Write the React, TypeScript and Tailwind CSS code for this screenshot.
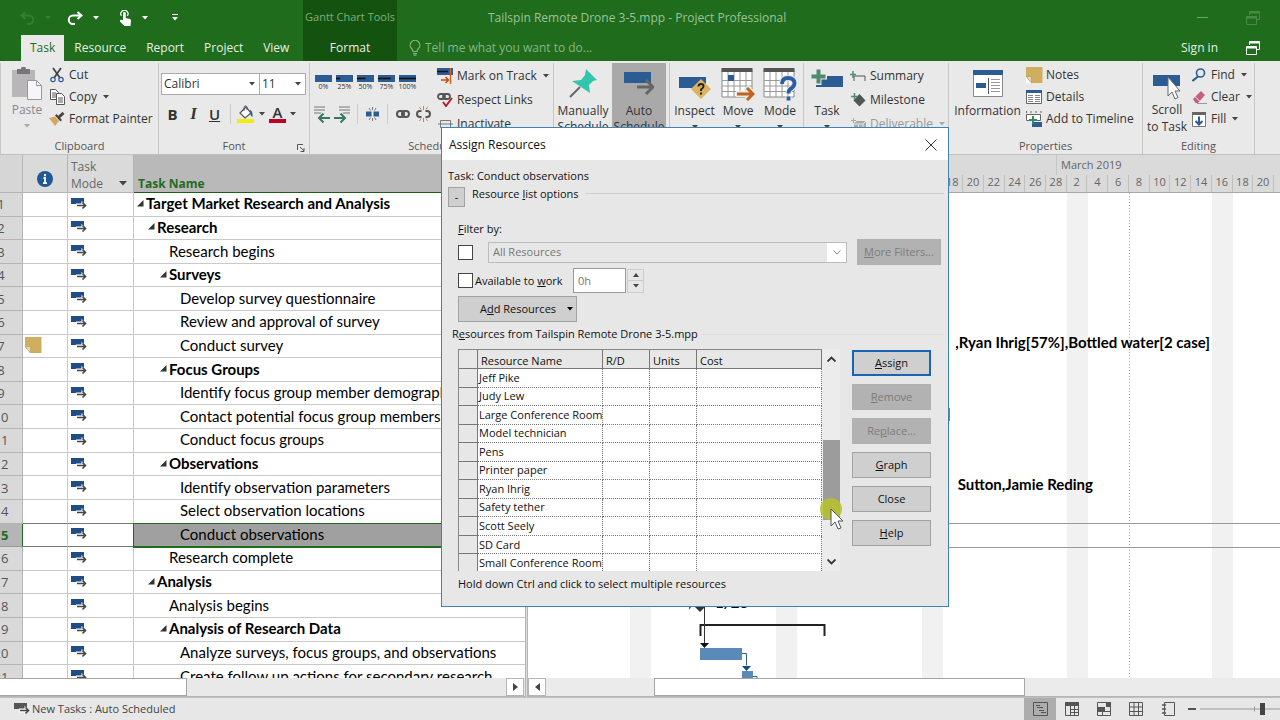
import { useState } from "react";
import type { ReactNode } from "react";

type Task = { id: number; name: string; level: number; summary?: boolean; note?: boolean };

const TASKS: Task[] = [
  { id: 1, name: "Target Market Research and Analysis", level: 0, summary: true },
  { id: 2, name: "Research", level: 1, summary: true },
  { id: 3, name: "Research begins", level: 2 },
  { id: 4, name: "Surveys", level: 2, summary: true },
  { id: 5, name: "Develop survey questionnaire", level: 3 },
  { id: 6, name: "Review and approval of survey", level: 3 },
  { id: 7, name: "Conduct survey", level: 3, note: true },
  { id: 8, name: "Focus Groups", level: 2, summary: true },
  { id: 9, name: "Identify focus group member demographics", level: 3 },
  { id: 10, name: "Contact potential focus group members", level: 3 },
  { id: 11, name: "Conduct focus groups", level: 3 },
  { id: 12, name: "Observations", level: 2, summary: true },
  { id: 13, name: "Identify observation parameters", level: 3 },
  { id: 14, name: "Select observation locations", level: 3 },
  { id: 15, name: "Conduct observations", level: 3 },
  { id: 16, name: "Research complete", level: 2 },
  { id: 17, name: "Analysis", level: 1, summary: true },
  { id: 18, name: "Analysis begins", level: 2 },
  { id: 19, name: "Analysis of Research Data", level: 2, summary: true },
  { id: 20, name: "Analyze surveys, focus groups, and observations", level: 3 },
  { id: 21, name: "Create follow up actions for secondary research", level: 3 },
];

const RESOURCES = [
  "Jeff Pike",
  "Judy Lew",
  "Large Conference Room",
  "Model technician",
  "Pens",
  "Printer paper",
  "Ryan Ihrig",
  "Safety tether",
  "Scott Seely",
  "SD Card",
  "Small Conference Room",
];

const INDENT = ["pl-[3px]", "pl-[14px]", "pl-[26px]", "pl-[37px]"];

const DAYS = [18, 20, 22, 24, 26, 28, 2, 4, 6, 8, 10, 12, 14, 16, 18, 20];

const BLUE = "#2b5c94";

function Caret({ className = "text-[#444]" }: { className?: string }) {
  return (
    <svg width="6" height="4" viewBox="0 0 6 4" className={`shrink-0 ${className}`}>
      <path d="M0 0h6L3 3.5z" fill="currentColor" />
    </svg>
  );
}

function ModeIcon({ color = "#1f4e86" }: { color?: string }) {
  return (
    <svg width="16" height="13" viewBox="0 0 16 13" className="shrink-0">
      <path d="M0 0h13v6H0z" fill={color} />
      <path d="M5 5.500h5.500V3L16 7.500 10.500 12V9.500H5z" fill="#fff" />
      <path d="M6 7.500h8M11.500 4.500l3 3-3 3" fill="none" stroke="#444" strokeWidth="1.600" />
    </svg>
  );
}

function NoteIcon() {
  return (
    <svg width="17" height="16" viewBox="0 0 17 16" className="shrink-0">
      <path d="M0 0h16.500v16H5.500L0 10z" fill="#cfae60" />
      <path d="M0 9.500h5.500V16H0z" fill="#fff" />
      <path d="M0 9.500 5.500 16V9.500z" fill="#e8d9ae" stroke="#a78a45" strokeWidth=".6" />
    </svg>
  );
}

function RestoreIcon() {
  return (
    <svg width="14" height="14" viewBox="0 0 14 14" fill="none" stroke="currentColor">
      <path d="M3.500 4V.500h10v8H11" />
      <path d="M3.500 1.500h10" strokeWidth="2" />
      <path d="M.500 5.500h10v8H.500z" />
      <path d="M.500 6.500h10" strokeWidth="2" />
    </svg>
  );
}

function Header() {
  return (
    <header className="flex h-[61px] shrink-0 bg-[#1f6c1c] text-[12px] text-[#e6f0e4]">
      <div className="flex w-[303px] shrink-0 flex-col">
        <div className="flex h-[35px] items-center pl-5">
          <button aria-label="Undo" className="flex items-center gap-2.5 text-[#387c34]">
            <svg width="15" height="14" viewBox="0 0 15 14" fill="none" stroke="currentColor" strokeWidth="2">
              <path d="M5.500 1 1.500 4.500l4 3.500M2 4.500h7a4 4 0 0 1 0 8.500H7" />
            </svg>
            <Caret className="text-[#387c34]" />
          </button>
          <button aria-label="Redo" className="ml-4 flex items-center gap-2.5 text-white">
            <svg width="16" height="14" viewBox="0 0 16 14" fill="none" stroke="currentColor" strokeWidth="2">
              <path d="m10.500 1 4 3.500-4 3.500M14 4.500H6A4 4 0 0 0 6 13h2" />
            </svg>
            <Caret className="text-white" />
          </button>
          <button aria-label="Touch/Mouse Mode" className="ml-5 flex items-center gap-2.5 text-white">
            <svg width="13" height="16" viewBox="0 0 13 16">
              <path
                d="M4 10V3.500a1.400 1.400 0 0 1 2.800 0V8l4.200 1q1.200.4 1 1.800L11.500 16H5.500L1 11.500Q.500 10 2 9.800z"
                fill="currentColor"
              />
              <path d="M2.500 6a3.600 3.600 0 1 1 5.800 0" fill="none" stroke="currentColor" strokeWidth="1.200" />
            </svg>
            <Caret className="text-white" />
          </button>
          <button aria-label="Customize Quick Access Toolbar" className="ml-6 flex flex-col items-center gap-0.5">
            <span className="h-px w-1.5 bg-white" />
            <Caret className="text-white" />
          </button>
        </div>
        <nav className="flex h-[26px] items-stretch pl-[21px]">
          <button className="bg-[#e9e9e9] px-[9px] text-[#1f6c1c]">Task</button>
          <button className="px-2.5">Resource</button>
          <button className="px-2.5">Report</button>
          <button className="px-2.5">Project</button>
          <button className="px-2.5">View</button>
        </nav>
      </div>
      <div className="flex w-[94px] shrink-0 flex-col bg-[#14530f]">
        <span className="flex h-[35px] items-center justify-center text-[11px] whitespace-nowrap text-[#7fae7b]">
          Gantt Chart Tools
        </span>
        <button className="h-[26px]">Format</button>
      </div>
      <div className="flex min-w-0 flex-1 flex-col">
        <div className="flex h-[35px] items-center justify-between pr-5 pl-[91px]">
          <h1 className="whitespace-nowrap text-[#9dc29a]">Tailspin Remote Drone 3-5.mpp - Project Professional</h1>
          <div className="flex items-center gap-[38px] text-[#498a46]">
            <button aria-label="Minimize" className="flex h-3.5 items-center">
              <span className="h-px w-[11px] bg-[#6ca169]" />
            </button>
            <button aria-label="Restore">
              <RestoreIcon />
            </button>
          </div>
        </div>
        <div className="flex h-[26px] items-center justify-between pr-5 pl-3">
          <label className="flex flex-1 items-center gap-1 text-[#86b583]">
            <svg width="12" height="16" viewBox="0 0 12 16" fill="none" stroke="currentColor" strokeWidth="1.200">
              <path d="M4 11.500Q4 10 2.500 8.500a4.800 4.800 0 1 1 7 0Q8 10 8 11.500z" />
              <path d="M4 13.500h4M4.500 15.200h3" />
            </svg>
            <input
              aria-label="Tell me what you want to do"
              placeholder="Tell me what you want to do..."
              className="w-[200px] bg-transparent outline-none placeholder:text-[#86b583]"
            />
          </label>
          <button>Sign in</button>
          <button aria-label="Restore window" className="ml-7 text-white">
            <RestoreIcon />
          </button>
        </div>
      </div>
    </header>
  );
}

function Group({ label, className, children }: { label: string; className: string; children: ReactNode }) {
  return (
    <section className={`flex shrink-0 flex-col border-r border-[#c6c6c6] ${className}`}>
      <div className="flex flex-1">{children}</div>
      <div className="h-4 text-center text-[11px] leading-4 text-[#555]">{label}</div>
    </section>
  );
}

function SmallButton({ icon, label, menu, muted }: { icon: ReactNode; label: string; menu?: boolean; muted?: boolean }) {
  return (
    <button className={`flex h-[22px] items-center gap-1 whitespace-nowrap ${muted ? "text-[#999]" : ""}`}>
      <span className="flex w-4 shrink-0 justify-center">{icon}</span>
      {label}
      {menu && (
        <span className="ml-0.5">
          <Caret className={muted ? "text-[#aaa]" : "text-[#444]"} />
        </span>
      )}
    </button>
  );
}

function LargeButton({
  icon,
  label,
  className = "",
  menu,
}: {
  icon: ReactNode;
  label: string;
  className?: string;
  menu?: boolean;
}) {
  return (
    <button className={`flex flex-col items-center ${className}`}>
      <span className="flex h-[38px] items-center">{icon}</span>
      <span className="leading-4">{label}</span>
      {menu && (
        <span className="mt-1.5">
          <Caret />
        </span>
      )}
    </button>
  );
}

function PercentButton({ value }: { value: number }) {
  return (
    <button className="flex w-[21px] flex-col items-center">
      <svg width="17" height="7" viewBox="0 0 17 7">
        <path d="M0 0h17v7H0z" fill={BLUE} />
        <path d={`M0 3.500h${(17 * value) / 100}`} stroke="#111" strokeWidth="1.600" />
      </svg>
      <span className="text-[7px] leading-[9px]">{value}%</span>
    </button>
  );
}

function CalendarGrid({ children }: { children?: ReactNode }) {
  return (
    <svg width="34" height="34" viewBox="0 0 34 34">
      <path d="M1 3h30v27H1z" fill="#fff" stroke="#888" />
      <path d="M1 13.500h30M1 19h30M1 24.500h30M7 5v25M13 5v25M19 5v25M25 5v25" stroke="#999" />
      <path d="M.500 1h31v4H.500z" fill="#555" />
      {children}
    </svg>
  );
}

function Ribbon() {
  const [font, setFont] = useState("Calibri");
  const [size, setSize] = useState("11");

  return (
    <div className="flex h-[94px] shrink-0 border-b border-[#c0c0c0] bg-[#e9e9e9] pt-0.5 text-[12px] text-[#333]">
      <Group label="Clipboard" className="w-[159px] border-l">
        <button className="flex w-12 flex-col items-center pt-1 pl-1 text-[#888]">
          <svg width="30" height="34" viewBox="0 0 30 34">
            <path d="M0 3h23v27H0z" fill="#b9b6ba" />
            <path d="M5 2h4a2.500 2.500 0 0 1 5 0h4v5H5z" fill="#777" />
            <path d="M15.500 13.500h9l5 5v14h-14z" fill="#f6f6fa" stroke="#999" />
            <path d="M24.500 13.500v5h5" fill="none" stroke="#999" />
          </svg>
          <span className="leading-[17px]">Paste</span>
          <span className="mt-1.5">
            <Caret className="text-[#aaa]" />
          </span>
        </button>
        <div className="flex flex-col pt-px">
          <SmallButton
            label="Cut"
            icon={
              <svg width="14" height="16" viewBox="0 0 14 16" fill="none">
                <path d="M3 1l7 10M11 1 4 11" stroke="#444" strokeWidth="1.800" />
                <circle cx="3" cy="12.500" r="2.200" stroke={BLUE} strokeWidth="1.200" />
                <circle cx="11" cy="12.500" r="2.200" stroke={BLUE} strokeWidth="1.200" />
              </svg>
            }
          />
          <SmallButton
            label="Copy"
            menu
            icon={
              <svg width="15" height="16" viewBox="0 0 15 16" fill="#fff" stroke="#555">
                <path d="M.500.500h5l3 3v7h-8z" />
                <path d="M2 4h4M2 6h4M2 8h4" />
                <path d="M6.500 4.500h5l3 3v8h-8z" />
                <path d="M8 9h5M8 11h5M8 13h5" />
              </svg>
            }
          />
          <SmallButton
            label="Format Painter"
            icon={
              <svg width="16" height="14" viewBox="0 0 16 14">
                <path d="M0 6l6-1.500L10 9 6 14z" fill="#d6a75c" />
                <path d="m6 3.500 5.500 6L13 8 7.500 2z" fill="#444" />
                <path d="M9.500 5.500 14.500 1" stroke="#444" strokeWidth="3" />
              </svg>
            }
          />
        </div>
      </Group>

      <Group label="Font" className="relative w-[151px]">
        <div className="flex flex-1 flex-col gap-2 pt-[10px] pl-[2px]">
          <div className="flex h-[22px] text-[12px]">
            <label className="relative flex w-[99px] items-center border border-[#ababab] bg-white">
              <select
                aria-label="Font"
                value={font}
                onChange={(e) => setFont(e.target.value)}
                className="w-full appearance-none pl-0.5 outline-none"
              >
                <option>Calibri</option>
                <option>Arial</option>
              </select>
              <span className="pointer-events-none absolute right-1">
                <Caret />
              </span>
            </label>
            <label className="relative flex w-[46px] items-center border border-l-0 border-[#ababab] bg-white">
              <select
                aria-label="Font size"
                value={size}
                onChange={(e) => setSize(e.target.value)}
                className="w-full appearance-none pl-0.5 outline-none"
              >
                <option>11</option>
                <option>12</option>
              </select>
              <span className="pointer-events-none absolute right-1">
                <Caret />
              </span>
            </label>
          </div>
          <div className="flex h-[22px] items-center pl-1.5 text-[15px]">
            <button className="w-[11px] font-bold">B</button>
            <button className="ml-2.5 w-[11px] font-['Liberation_Serif',serif] text-[17px] font-bold italic">I</button>
            <button className="ml-2.5 w-[11px] font-semibold underline">U</button>
            <span className="ml-2.5 h-5 w-px bg-[#ccc]" />
            <button aria-label="Background Color" className="ml-1.5 flex items-center gap-1">
              <svg width="18" height="18" viewBox="0 0 18 18">
                <path d="m3 8 6-6 5 6-6 5z" fill="#fff" stroke="#555" strokeWidth="1.200" />
                <path d="M7 6V2.500a1.500 1.500 0 0 1 3 0V5" fill="none" stroke="#555" />
                <path d="M13 5q3 1 2.500 7-2-1-2.500-4z" fill={BLUE} />
                <path d="M0 14h17v4H0z" fill="#f2ee0a" />
              </svg>
              <Caret />
            </button>
            <button aria-label="Font Color" className="ml-1 flex items-center gap-1">
              <span className="flex w-[17px] flex-col items-center">
                <span className="text-[15px] leading-[14px] font-semibold">A</span>
                <span className="h-1 w-full bg-[#c00020]" />
              </span>
              <Caret />
            </button>
          </div>
        </div>
        <button aria-label="Font settings" className="absolute right-1 bottom-0.5">
          <svg width="8" height="8" viewBox="0 0 8 8" fill="none" stroke="#555">
            <path d="M.500 6V.500H6M3 3l4 4M7 4v3.500H3.500" />
          </svg>
        </button>
      </Group>

      <Group label="Schedule" className="w-[244px]">
        <div className="flex w-[127px] flex-col gap-[13px] pt-3 pl-[3px]">
          <div className="flex">
            <PercentButton value={0} />
            <PercentButton value={25} />
            <PercentButton value={50} />
            <PercentButton value={75} />
            <PercentButton value={100} />
          </div>
          <div className="flex items-center">
            <button aria-label="Outdent">
              <svg width="18" height="17" viewBox="0 0 18 17" fill="none">
                <path d="M1 1h11M1 4h11M1 7h7" stroke="#777" />
                <path d="M17 12H6M10.500 7.500 6 12l4.500 4.500" stroke="#357a5c" strokeWidth="2" />
              </svg>
            </button>
            <button aria-label="Indent" className="ml-0.5">
              <svg width="18" height="17" viewBox="0 0 18 17" fill="none">
                <path d="M6 1h11M6 4h11M10 7h7" stroke="#777" />
                <path d="M1 12h11M7.500 7.500 12 12l-4.500 4.500" stroke="#357a5c" strokeWidth="2" />
              </svg>
            </button>
            <span className="ml-1.5 h-5 w-px bg-[#ccc]" />
            <button aria-label="Split Task" className="ml-2">
              <svg width="13" height="14" viewBox="0 0 13 14">
                <path d="M0 4.500h5.500v5H0zM7.500 4.500H13v5H7.500z" fill={BLUE} />
                <path d="M6.500 0v3M6.500 11v3M3 1l1.500 2.500M10 1 8.500 3.500M3 13l1.500-2.500M10 13l-1.500-2.500" stroke="#777" />
              </svg>
            </button>
            <span className="ml-2 h-5 w-px bg-[#ccc]" />
            <button aria-label="Link Tasks" className="ml-2">
              <svg width="14" height="8" viewBox="0 0 14 8" fill="none" stroke="#555" strokeWidth="2">
                <rect x="1" y="1" width="7" height="6" rx="3" />
                <rect x="6" y="1" width="7" height="6" rx="3" />
              </svg>
            </button>
            <button aria-label="Unlink Tasks" className="ml-1.5">
              <svg width="15" height="16" viewBox="0 0 15 16" fill="none">
                <path d="M5.500 5H4a3 3 0 0 0 0 6h1.500M9.500 5H11a3 3 0 0 1 0 6H9.500" stroke="#555" strokeWidth="2" />
                <path d="M7.500 0v4M7.500 12v4M3.500 1 5 3.500M11.500 1 10 3.500M3.500 15 5 12.500M11.500 15l-1.500-2.500" stroke="#c08560" />
              </svg>
            </button>
          </div>
        </div>
        <div className="flex flex-col gap-0.5 pt-0.5">
          <SmallButton
            label="Mark on Track"
            menu
            icon={
              <svg width="16" height="16" viewBox="0 0 16 16" fill="none">
                <path d="M0 0h16v7H0z" fill={BLUE} />
                <path d="M0 3.500h11" stroke="#111" strokeWidth="1.500" />
                <path d="M13.500 0v16" stroke="#d4631c" strokeWidth="1.500" />
                <path d="M4 12h7M8.500 9l3 3-3 3" stroke="#c24d12" strokeWidth="1.500" />
              </svg>
            }
          />
          <SmallButton
            label="Respect Links"
            icon={
              <svg width="16" height="14" viewBox="0 0 16 14" fill="none">
                <rect x="1" y="1" width="7" height="5" rx="2.500" stroke="#555" strokeWidth="1.800" />
                <rect x="6" y="1" width="7" height="5" rx="2.500" stroke="#555" strokeWidth="1.800" />
                <path d="m6 9 3 4 6-8" stroke="#b3202a" strokeWidth="2" />
              </svg>
            }
          />
          <SmallButton
            label="Inactivate"
            icon={
              <svg width="15" height="8" viewBox="0 0 15 8" fill="none" stroke="#777">
                <path d="M2.500.500h10v7h-10zM0 4h15" />
              </svg>
            }
          />
        </div>
      </Group>

      <Group label="" className="w-[116px]">
        <LargeButton
          className="w-[58px] pt-0.5 text-center"
          label="Manually Schedule"
          icon={
            <svg width="30" height="30" viewBox="0 0 30 30">
              <path d="M2 28 12 18" stroke="#666" strokeWidth="2" />
              <path d="M18 0 29 11l-4 1-4 4 1 8L4 12l9-1 4-5z" fill="#35c4ae" />
            </svg>
          }
        />
        <LargeButton
          className="w-[54px] bg-[#a9a9a9] pt-0.5 text-center"
          label="Auto Schedule"
          icon={
            <svg width="30" height="30" viewBox="0 0 30 30" fill="none">
              <path d="M0 3h27v11H0z" fill={BLUE} />
              <path d="M13 18h16M22 11l7 7-7 7" stroke="#666" strokeWidth="3" />
            </svg>
          }
        />
      </Group>

      <Group label="" className="w-[134px]">
        <LargeButton
          className="w-[49px] pt-0.5"
          label="Inspect"
          menu
          icon={
            <svg width="32" height="30" viewBox="0 0 32 30">
              <path d="M0 8h27v11H0z" fill={BLUE} />
              <path d="m22 10 10 10-10 10-10-10z" fill="#dcb35f" />
              <path d="M19.500 17.500q0-2.500 2.500-2.500t2.500 2.300Q24.500 19 22 20.500V22M22 23.500v2" fill="none" stroke="#222" strokeWidth="2" />
            </svg>
          }
        />
        <LargeButton
          className="w-[38px] pt-0.5"
          label="Move"
          menu
          icon={
            <CalendarGrid>
              <path d="M7 8h6v6H7z" fill={BLUE} />
              <path d="M15 27h17M25 20l7 7-7 7" fill="none" stroke="#e9e9e9" strokeWidth="6" />
              <path d="M16 27h15M26 21l6 6-6 6" fill="none" stroke="#c2621f" strokeWidth="3" />
            </CalendarGrid>
          }
        />
        <LargeButton
          className="w-[46px] pt-0.5"
          label="Mode"
          menu
          icon={
            <CalendarGrid>
              <path
                d="M19 17q0-6 6-6t6.500 5q0 3.500-3.500 5.500-2.500 1.500-2.500 5M25.500 29.500v4"
                fill="none"
                stroke="#e9e9e9"
                strokeWidth="6"
              />
              <path
                d="M19 17q0-6 6-6t6.500 5q0 3.500-3.500 5.500-2.500 1.500-2.500 5M25.500 29.500v4"
                fill="none"
                stroke="#2b5ea4"
                strokeWidth="3.800"
              />
            </CalendarGrid>
          }
        />
      </Group>

      <Group label="" className="w-[145px]">
        <LargeButton
          className="w-[46px] pt-0.5"
          label="Task"
          menu
          icon={
            <svg width="32" height="30" viewBox="0 0 32 30">
              <path d="M5 7h27v11H5z" fill={BLUE} />
              <path d="M7.500 0v16M0 7.500h16" stroke="#e9e9e9" strokeWidth="6" />
              <path d="M7.500.500v14M.500 7.500h14" stroke="#4f8b70" strokeWidth="4" />
            </svg>
          }
        />
        <div className="flex flex-col gap-0.5 pt-0.5">
          <SmallButton
            label="Summary"
            icon={
              <svg width="16" height="10" viewBox="0 0 16 10" fill="none">
                <path d="M4 10V5h11v5" stroke="#555" />
                <path d="M3 0v7M0 3.500h6" stroke="#4f8b70" strokeWidth="1.500" />
              </svg>
            }
          />
          <SmallButton
            label="Milestone"
            icon={
              <svg width="15" height="14" viewBox="0 0 15 14" fill="none">
                <path d="m8.500 1 6 6.500-6 6-6-6z" fill="#555" />
                <path d="M3.500 0v7M0 3.500h7" stroke="#4f8b70" strokeWidth="1.500" />
              </svg>
            }
          />
          <SmallButton
            label="Deliverable"
            menu
            muted
            icon={
              <svg width="15" height="13" viewBox="0 0 15 13" fill="none">
                <path d="m3 5 3-2h9v7l-3 3H3z" fill="#aaa" />
                <path d="M3 6h9v7M12 6l3-3M7.500 6v7" stroke="#e9e9e9" />
                <path d="M2.500 0v5M0 2.500h5" stroke="#aaa" />
              </svg>
            }
          />
        </div>
      </Group>

      <Group label="Properties" className="w-[194px]">
        <LargeButton
          className="w-[77px] pt-0.5"
          label="Information"
          icon={
            <svg width="30" height="28" viewBox="0 0 30 28" fill="none">
              <path d="M.500.500h29v26H.500z" fill="#fff" stroke="#888" />
              <path d="M0 0h30v5H0z" fill={BLUE} />
              <path d="M3 13h10v5H3z" fill={BLUE} />
              <path d="M15.500 8v16" stroke="#555" />
              <path d="M18 9.500h9M18 12.500h9M18 15.500h9M18 18.500h9M18 21.500h9" stroke="#999" />
            </svg>
          }
        />
        <div className="flex flex-col pt-px">
          <SmallButton label="Notes" icon={<NoteIcon />} />
          <SmallButton
            label="Details"
            icon={
              <svg width="16" height="14" viewBox="0 0 16 14">
                <path d="M.500.500h15v13H.500z" fill="#fff" stroke="#666" />
                <path d="M0 0h16v3H0z" fill={BLUE} />
                <path d="M2 5.500h5M2 7.500h5M2 9.500h5M2 11.500h5M9 5.500h5M9 7.500h5M9 9.500h5M9 11.500h5" stroke="#888" />
              </svg>
            }
          />
          <SmallButton
            label="Add to Timeline"
            icon={
              <svg width="16" height="16" viewBox="0 0 16 16" fill="none">
                <path d="M.500 0v2M5 0v2M10 0v2M15 0v2" stroke="#666" />
                <path d="M.500 3.500h14v6H.500z" fill="#fff" stroke="#666" />
                <path d="M6 11h10v5H6z" fill={BLUE} />
                <path d="M7 5v8M3 9h8" stroke="#3b8564" strokeWidth="2" />
              </svg>
            }
          />
        </div>
      </Group>

      <Group label="Editing" className="w-[112px]">
        <button className="flex w-[48px] flex-col items-center pt-2">
          <svg width="30" height="30" viewBox="0 0 30 30">
            <path d="M1 4h27v11H1z" fill={BLUE} />
            <path d="M16 6v19l4-4 3 7 3-1.500-3-6.500h5z" fill="#fff" stroke="#666" />
          </svg>
          <span className="leading-[17px]">Scroll</span>
          <span className="leading-[17px] whitespace-nowrap">to Task</span>
        </button>
        <div className="flex flex-col pt-px">
          <SmallButton
            label="Find"
            menu
            icon={
              <svg width="14" height="14" viewBox="0 0 14 14" fill="none" stroke="#2b5c94">
                <circle cx="8.500" cy="5" r="4" strokeWidth="1.600" />
                <path d="M6 8.500.500 13" strokeWidth="2.200" />
              </svg>
            }
          />
          <SmallButton
            label="Clear"
            menu
            icon={
              <svg width="15" height="14" viewBox="0 0 15 14">
                <path d="M1 9 9 1l4 4-7 8H3.500z" fill="#c4607f" />
                <path d="m3 6.500 4.500 4.500" stroke="#e9e9e9" />
                <path d="M5 13.500h10" stroke="#999" />
              </svg>
            }
          />
          <SmallButton
            label="Fill"
            menu
            icon={
              <svg width="14" height="15" viewBox="0 0 14 15" fill="none">
                <path d="M.500.500h13v14H.500z" fill="#fff" stroke="#777" />
                <path d="M0 0h14v3H0z" fill="#666" />
                <path d="M7 4.500v8M3.500 9 7 12.500 10.500 9" stroke={BLUE} strokeWidth="2" />
              </svg>
            }
          />
        </div>
      </Group>
    </div>
  );
}

function TaskTable() {
  return (
    <div className="flex w-[525px] shrink-0 flex-col">
      <div className="min-h-0 flex-1 overflow-hidden bg-white">
        <table className="h-[534px] w-full table-fixed border-separate border-spacing-0 text-left font-['Lato',sans-serif] text-[15px] text-black">
          <thead className="font-['Open_Sans',sans-serif] text-[12px] text-[#666]">
            <tr className="h-[38px] bg-[#dadada]">
              <th className="w-[23px] border-r border-b border-[#b5b5b5] bg-[#d6d6d6] p-0" />
              <th className="w-[45px] border-r border-b border-[#b5b5b5] p-0">
                <svg width="16" height="16" viewBox="0 0 16 16" className="mx-auto mt-2.5" aria-label="Indicators">
                  <circle cx="8" cy="8" r="8" fill="#1f5a94" />
                  <path d="M8 3v2.200M6.500 7H8v5M6 12.200h4" stroke="#fff" strokeWidth="1.800" fill="none" />
                </svg>
              </th>
              <th className="w-[66px] border-r border-b border-[#b5b5b5] p-0 pt-0.5 pl-[3px] font-normal">
                <div className="flex items-end justify-between pr-1.5 leading-[17px]">
                  <span>
                    Task
                    <br />
                    Mode
                  </span>
                  <svg width="8" height="5" viewBox="0 0 8 5" className="mb-1.5">
                    <path d="M0 0h8L4 4.500z" fill="#444" />
                  </svg>
                </div>
              </th>
              <th className="border-b border-[#1f5c1c] bg-[#b9b9b9] p-0 pl-1 align-bottom leading-[17px] font-bold text-[#1f6c1c]">
                Task Name
              </th>
            </tr>
          </thead>
          <tbody>
            {TASKS.map((task) => {
              const selected = task.id === 15;
              return (
                <tr key={task.id} className="leading-5">
                  <th
                    className={`overflow-hidden border-r border-b p-0 font-['Open_Sans',sans-serif] text-[13px] ${
                      selected
                        ? "border-r-[#1f6c1c] border-b-[#999] bg-[#b5b5b5] font-bold text-[#1f6c1c]"
                        : "border-[#b5b5b5] bg-[#d9d9d9] font-normal text-[#555]"
                    }`}
                  >
                    <div className="-ml-5 text-center">{task.id}</div>
                  </th>
                  <td className={`border-r border-b border-[#c9c9c9] p-0 pb-0.5 pl-0.5 ${selected || task.id === 14 ? "border-b-[#777]" : ""}`}>
                    {task.note && <NoteIcon />}
                  </td>
                  <td className={`border-r border-b border-[#c9c9c9] p-0 pl-[3px] ${selected || task.id === 14 ? "border-b-[#777]" : ""}`}>
                    <ModeIcon />
                  </td>
                  <td
                    className={`overflow-hidden border-b p-0 pb-0.5 ${
                      selected
                        ? "border-b-[#1f6c1c] bg-[#a0a0a0] outline outline-[#1f6c1c]"
                        : task.id === 14
                          ? "border-b-[#1f6c1c]"
                          : "border-[#c9c9c9]"
                    }`}
                  >
                    <div className={`flex items-center gap-0.5 whitespace-nowrap ${INDENT[task.level]}`}>
                      <svg width="7" height="7" viewBox="0 0 7 7" className="shrink-0">
                        {task.summary && <path d="M6.500 0v6.500H0z" fill="#333" />}
                      </svg>
                      <span className={task.summary ? "font-bold" : ""}>{task.name}</span>
                    </div>
                  </td>
                </tr>
              );
            })}
          </tbody>
        </table>
      </div>
      <div className="flex h-[19px] shrink-0 justify-between border-b border-[#b5b5b5] bg-[#e9e9e9] pr-px">
        <div className="h-[18px] w-[187px] border border-l-0 border-[#a5a5a5] bg-white" />
        <button aria-label="Scroll right" className="flex h-[18px] w-[18px] items-center justify-center border border-[#b5b5b5] bg-white">
          <svg width="5" height="8" viewBox="0 0 5 8">
            <path d="M0 0v8l5-4z" fill="#444" />
          </svg>
        </button>
      </div>
    </div>
  );
}

function GanttChart() {
  return (
    <div className="flex min-w-0 flex-1 flex-col border-l border-[#b5b5b5]">
      <div className="h-[38px] shrink-0 overflow-hidden border-b border-[#a8a8a8] bg-[#dadada] text-[11px] text-[#666]">
        <div className="flex h-5 pl-[528px] leading-5">
          <span className="border-l border-[#c6c6c6] pl-1">March 2019</span>
        </div>
        <div className="grid h-[17px] grid-cols-36 pr-1.5 leading-[14px]">
          {DAYS.map((day, i) => (
            <span key={i} className="border-r border-[#c0c0c0] text-center first:col-start-21">
              {day}
            </span>
          ))}
        </div>
      </div>
      <div className="relative min-h-0 flex-1 overflow-hidden bg-white font-['Lato',sans-serif] text-[15px] font-bold text-black">
        <svg width="100%" height="100%" className="block">
          <path d="M102 0h21v486h-21zM248 0h21v486h-21zM394 0h21v486h-21zM539 0h21v486h-21zM684 0h21v486h-21z" fill="#f1f1f1" />
          <path d="M601.500 0v486" stroke="#aaa" strokeDasharray="1 2" />
          <path d="M0 330.500h760M0 354.500h760" stroke="#999" />
          <path d="M400 215h22v13h-22z" fill="#5b8ab8" />
          <path d="M161 407h7l-7 10z" fill="#1d6290" />
          <path d="M172 419l-7-7 7-7 7 7z" fill="#333" />
          <path d="M172.500 443v-11h124v11" fill="none" stroke="#222" strokeWidth="2" />
          <path d="M176.500 412v42" stroke="#333" />
          <path d="M172 450h9l-4.500 5z" fill="#111" />
          <path d="M172 455h42v12h-42zM214 478h11v12h-11z" fill="#5b8ab8" />
          <path d="M214 460.500h4.500v12M225 483.500h4v5" fill="none" stroke="#2b5c94" />
          <path d="M214 473h9l-4.500 5z" fill="#15488c" />
        </svg>
        <span className="absolute top-[140px] right-[70px] leading-[18px] whitespace-nowrap">,Ryan Ihrig[57%],Bottled water[2 case]</span>
        <span className="absolute top-[282px] right-[187px] leading-[18px] whitespace-nowrap">Sutton,Jamie Reding</span>
        <span className="absolute top-[400px] left-[187px] leading-[18px]">1/28</span>
      </div>
      <div className="flex h-[19px] shrink-0 border-b border-[#b5b5b5] bg-[#ebebeb]">
        <button aria-label="Scroll left" className="flex h-[18px] w-[18px] items-center justify-center border border-[#b5b5b5] bg-white">
          <svg width="5" height="8" viewBox="0 0 5 8">
            <path d="M5 0v8L0 4z" fill="#444" />
          </svg>
        </button>
        <div className="ml-[108px] h-[18px] w-[371px] border border-[#a5a5a5] bg-white" />
      </div>
    </div>
  );
}

function DialogButton({
  children,
  className = "",
  disabled,
  primary,
}: {
  children: ReactNode;
  className?: string;
  disabled?: boolean;
  primary?: boolean;
}) {
  return (
    <button
      disabled={disabled}
      className={`h-[26px] bg-[#cfcfcf] disabled:border-[#b0b0b0] disabled:bg-[#b2b2b2] disabled:text-[#7c7c7c] ${
        primary ? "border-2 border-[#1a62b3]" : "border border-[#a2a2a2]"
      } ${className}`}
    >
      {children}
    </button>
  );
}

function AssignResourcesDialog() {
  const [filter, setFilter] = useState(false);
  const [available, setAvailable] = useState(false);
  const [hours, setHours] = useState("0h");

  return (
    <div
      role="dialog"
      aria-labelledby="dialog-title"
      className="absolute top-[127px] left-[441px] h-[480px] w-[508px] border border-[#3d83b5] bg-[#e7e7e7] text-[11px] leading-[14px] text-[#111]"
    >
      <div className="flex h-8 items-center justify-between bg-white pt-px pr-[11px] pl-[7px]">
        <h2 id="dialog-title" className="text-[12px]">
          Assign Resources
        </h2>
        <button aria-label="Close dialog">
          <svg width="12" height="12" viewBox="0 0 12 12" stroke="#333">
            <path d="m.500.500 11 11M11.500.500l-11 11" />
          </svg>
        </button>
      </div>

      <div className="pt-[9px] pl-1.5">
        <p>Task: Conduct observations</p>
        <div className="mt-1 flex pr-1">
          <button aria-label="Toggle resource list options" className="h-5 w-[17px] border border-[#a2a2a2] bg-[#cfcfcf]">
            -
          </button>
          <span className="ml-[7px]">
            Resource <u>l</u>ist options
          </span>
          <span className="mt-1.5 ml-1.5 h-px flex-1 bg-[#d0d0d0]" />
        </div>
      </div>

      <div className="pt-[15px] pr-[7px] pl-4">
        <label htmlFor="filter-select">
          <u>F</u>ilter by:
        </label>
        <div className="mt-[3px] flex items-center">
          <input
            type="checkbox"
            aria-label="Filter by"
            checked={filter}
            onChange={(e) => setFilter(e.target.checked)}
            className="size-[15px] appearance-none border border-[#444] bg-white checked:bg-[#2b5c94]"
          />
          <div className="relative ml-[15px] flex-1">
            <select id="filter-select" disabled={!filter} className="block h-[21px] w-full appearance-none border border-[#bcbcbc] px-1 text-[#777]">
              <option>All Resources</option>
            </select>
            <span className="pointer-events-none absolute top-px right-px flex h-[19px] w-[19px] items-center justify-center bg-white">
              <svg width="8" height="5" viewBox="0 0 8 5" fill="none" stroke="#888">
                <path d="m.500.500 3.500 3.500L7.500.500" />
              </svg>
            </span>
          </div>
          <DialogButton disabled={!filter} className="ml-[10px] w-[84px]">
            <u>M</u>ore Filters...
          </DialogButton>
        </div>
        <div className="mt-[3px] flex items-center">
          <label className="flex w-[115px] items-center gap-[2px] whitespace-nowrap">
            <input
              type="checkbox"
              checked={available}
              onChange={(e) => setAvailable(e.target.checked)}
              className="size-[15px] shrink-0 appearance-none border border-[#444] bg-white checked:bg-[#2b5c94]"
            />
            <span>
              Available to <u>w</u>ork
            </span>
          </label>
          <input
            aria-label="Available hours"
            value={hours}
            onChange={(e) => setHours(e.target.value)}
            className="h-[25px] w-[53px] border border-[#999] bg-white px-1 text-[#777]"
          />
          <div className="ml-px flex flex-col">
            <button aria-label="Increase" className="flex h-3 w-[17px] items-center justify-center border border-[#ccc]">
              <svg width="6" height="4" viewBox="0 0 6 4">
                <path d="M0 4h6L3 0z" fill="#444" />
              </svg>
            </button>
            <button aria-label="Decrease" className="flex h-3 w-[17px] items-center justify-center border border-t-0 border-[#ccc]">
              <Caret />
            </button>
          </div>
        </div>
        <DialogButton className="mt-[3px] flex w-[119px] items-center justify-between pr-[3px] pl-[21px]">
          <span>
            A<u>d</u>d Resources
          </span>
          <Caret className="text-black" />
        </DialogButton>
      </div>

      <div className="mt-[5px] flex items-center gap-1 pr-1 pl-[10px]">
        <span>
          R<u>e</u>sources from Tailspin Remote Drone 3-5.mpp
        </span>
        <span className="h-px flex-1 bg-[#dcdcdc]" />
      </div>

      <div className="mt-2 flex pl-4">
        <div className="h-[222px] w-[364px] overflow-hidden">
          <table className="h-[224px] w-full table-fixed border-separate border-spacing-0 border-t border-l border-[#888] bg-white text-left">
            <thead>
              <tr className="h-[19px] bg-[#e7e7e7]">
                <th className="w-[19px] border-r border-b border-[#777] p-0" />
                <th className="w-[125px] border-r border-b border-[#777] p-0 pt-1 pl-[3px] font-normal">Resource Name</th>
                <th className="w-[47px] border-r border-b border-[#777] p-0 pt-1 pl-[3px] font-normal">R/D</th>
                <th className="w-[47px] border-r border-b border-[#777] p-0 pt-1 pl-[3px] font-normal">Units</th>
                <th className="border-r border-b border-[#777] p-0 pt-1 pl-[3px] font-normal">Cost</th>
              </tr>
            </thead>
            <tbody>
              {RESOURCES.map((name) => (
                <tr key={name}>
                  <td className="border-r border-b border-[#777] bg-[#e7e7e7] p-0" />
                  <td className="border-r border-b border-dotted border-[#777] p-0 pl-px whitespace-nowrap">{name}</td>
                  <td className="border-r border-b border-dotted border-[#777] p-0" />
                  <td className="border-r border-b border-dotted border-[#777] p-0" />
                  <td className="border-r border-b border-dotted border-[#777] p-0" />
                </tr>
              ))}
            </tbody>
          </table>
        </div>
        <div className="relative flex w-[18px] flex-col items-center bg-[#ececec]">
          <button aria-label="Scroll up" className="flex h-5 items-center">
            <svg width="9" height="6" viewBox="0 0 9 6" fill="none" stroke="#333" strokeWidth="1.800">
              <path d="m.500 5.500 4-4 4 4" />
            </svg>
          </button>
          <div className="mt-[71px] h-[80px] w-[17px] bg-[#9c9c9c]" />
          <button aria-label="Scroll down" className="mt-auto flex h-[18px] items-center">
            <svg width="9" height="6" viewBox="0 0 9 6" fill="none" stroke="#333" strokeWidth="1.800">
              <path d="m.500.500 4 4 4-4" />
            </svg>
          </button>
          <svg width="26" height="34" viewBox="0 0 26 34" className="pointer-events-none absolute top-[149px] -left-0.5">
            <circle cx="11" cy="11" r="11" fill="#b9c22b" fillOpacity=".85" />
            <path d="M11 11v17l4-4 3 7 3-1-3-7h5z" fill="#fff" stroke="#555" />
          </svg>
        </div>
        <div className="ml-3 flex w-[79px] flex-col gap-2 pt-px">
          <DialogButton primary>
            <u>A</u>ssign
          </DialogButton>
          <DialogButton disabled>
            <u>R</u>emove
          </DialogButton>
          <DialogButton disabled>Re<u>p</u>lace...</DialogButton>
          <DialogButton>
            <u>G</u>raph
          </DialogButton>
          <DialogButton>Close</DialogButton>
          <DialogButton>
            <u>H</u>elp
          </DialogButton>
        </div>
      </div>
      <p className="mt-1.5 pl-4">Hold down Ctrl and click to select multiple resources</p>
    </div>
  );
}

function StatusBar() {
  return (
    <footer className="flex h-[22px] shrink-0 items-stretch justify-between bg-[#e7e7e7] text-[11px] text-[#444]">
      <div className="flex items-center gap-0.5 pl-[14px]">
        <ModeIcon color="#555" />
        New Tasks : Auto Scheduled
      </div>
      <div className="flex items-stretch">
        <button aria-label="Gantt Chart" className="flex w-8 items-center justify-center bg-[#adadad]">
          <svg width="15" height="14" viewBox="0 0 15 14" fill="none" stroke="#555">
            <path d="M.500.500h14v13H.500zM3 3.500h4M4 5.500h6M6 8.500h5M8 10.500h5" />
          </svg>
        </button>
        <button aria-label="Task Usage" className="flex w-8 items-center justify-center">
          <svg width="14" height="14" viewBox="0 0 14 14" fill="none" stroke="#555">
            <path d="M.500.500h13v13H.500zM5.500 4v10M9.500 4v10M5 7.500h9M5 10.500h9" />
            <path d="M0 2h14" strokeWidth="4" />
          </svg>
        </button>
        <button aria-label="Team Planner" className="flex w-8 items-center justify-center">
          <svg width="14" height="14" viewBox="0 0 14 14" fill="none" stroke="#555">
            <path d="M.500.500h13v13H.500zM0 9.500h14M5.500 9v5" />
            <path d="M9 0h5v5H9zM0 5h8v4H0z" fill="#555" stroke="none" />
          </svg>
        </button>
        <button aria-label="Resource Sheet" className="flex w-8 items-center justify-center">
          <svg width="14" height="14" viewBox="0 0 14 14" fill="none" stroke="#555">
            <path d="M.500.500h13v13H.500zM5 0v14M9.500 0v14M0 5h14M0 9.500h14" />
          </svg>
        </button>
        <button aria-label="Report" className="flex w-8 items-center justify-center">
          <svg width="13" height="14" viewBox="0 0 13 14" fill="none" stroke="#555">
            <path d="M2.500.500h10v13h-10z" />
            <path d="M0 3h4M0 7h4M0 11h4" strokeWidth="1.500" />
          </svg>
        </button>
        <div className="flex items-center pl-1">
          <button aria-label="Zoom out" className="h-0.5 w-2 bg-[#555]" />
          <svg width="80" height="12" viewBox="0 0 80 12" className="ml-1">
            <path d="M0 6h80M54.500 3.500v5" stroke="#999" />
            <path d="M60 0h5v12h-5z" fill="#444" />
          </svg>
        </div>
      </div>
    </footer>
  );
}

export default function App() {
  return (
    <div className="relative flex h-screen flex-col overflow-hidden bg-[#e7e7e7] font-['Open_Sans','Noto_Sans',sans-serif]">
      <Header />
      <Ribbon />
      <main className="flex min-h-0 flex-1 border-b border-[#c0c0c0]">
        <TaskTable />
        <div className="w-0.5 shrink-0 border-l border-[#b5b5b5] bg-[#dcdcdc]" />
        <GanttChart />
      </main>
      <StatusBar />
      <AssignResourcesDialog />
    </div>
  );
}
